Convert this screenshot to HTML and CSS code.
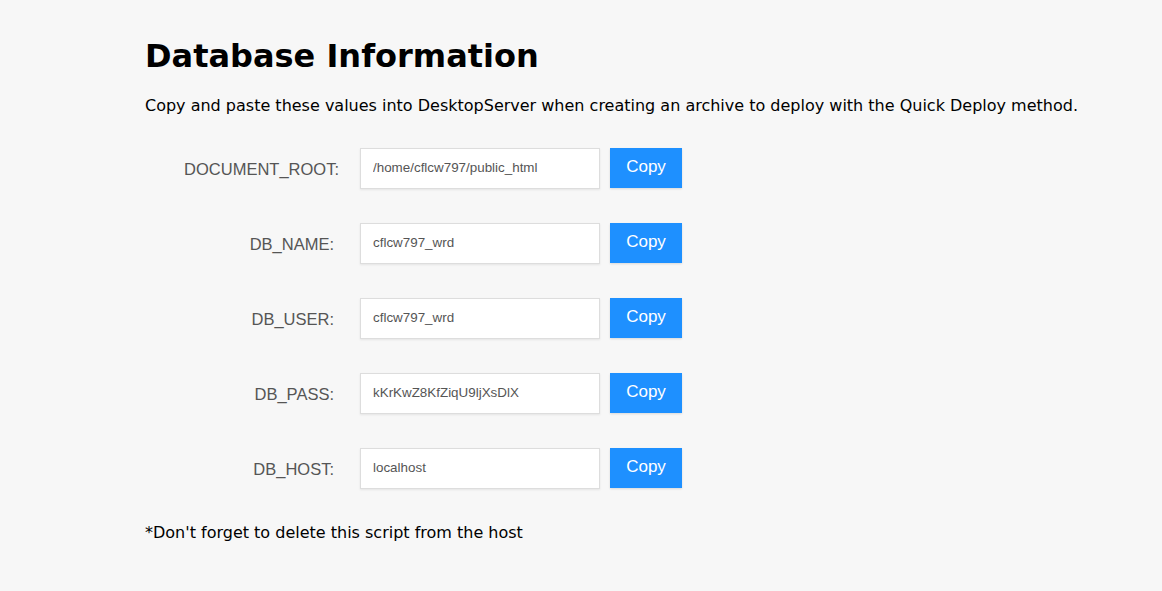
FILE: index.html
```html
<!DOCTYPE html>
<html>
<head>
<meta charset="utf-8">
<link rel="stylesheet" href="styles.css">
</head>
<body>
<div class="page">
  <h1 class="title">Database Information</h1>
  <p class="intro">Copy and paste these values into DesktopServer when creating an archive to deploy with the Quick Deploy method.</p>
  <div class="fields">
    <div class="row"><label class="label">DOCUMENT_ROOT:</label><input class="field" type="text" value="/home/cflcw797/public_html"><button class="copy">Copy</button></div>
    <div class="row"><label class="label label-short">DB_NAME:</label><input class="field" type="text" value="cflcw797_wrd"><button class="copy">Copy</button></div>
    <div class="row"><label class="label label-short">DB_USER:</label><input class="field" type="text" value="cflcw797_wrd"><button class="copy">Copy</button></div>
    <div class="row"><label class="label label-short">DB_PASS:</label><input class="field" type="text" value="kKrKwZ8KfZiqU9ljXsDlX"><button class="copy">Copy</button></div>
    <div class="row"><label class="label label-short">DB_HOST:</label><input class="field" type="text" value="localhost"><button class="copy">Copy</button></div>
  </div>
  <p class="note">*Don't forget to delete this script from the host</p>
</div>
</body>
</html>
```
FILE: styles.css
```css
html, body {
  margin: 0;
  padding: 0;
  background: #f7f7f7;
}
body {
  font-family: "DejaVu Sans", Verdana, sans-serif;
  color: #000;
}
.page {
  padding: 36px 0 0 145px;
}
.title {
  margin: 0;
  font-size: 32px;
  font-weight: bold;
  line-height: 40px;
}
.intro {
  margin: 18px 0 0 0;
  font-size: 16px;
  line-height: 24px;
}
.fields {
  margin-top: 30px;
  display: flex;
  flex-direction: column;
  gap: 35px;
}
.row {
  display: flex;
  align-items: center;
  height: 40px;
}
.label {
  width: 194px;
  box-sizing: border-box;
  text-align: right;
  font-family: "Liberation Sans", Arial, sans-serif;
  font-size: 16.5px;
  color: #555;
  padding-top: 3px;
}
.label-short {
  padding-right: 5px;
}
.field {
  margin-left: 21px;
  width: 240px;
  height: 41px;
  box-sizing: border-box;
  border: 1px solid #ddd;
  background: #fff;
  padding: 0 12px 1px 12px;
  font-family: "Liberation Sans", Arial, sans-serif;
  font-size: 13.4px;
  color: #555;
  box-shadow: 0 1px 2px rgba(0,0,0,0.08);
  outline: none;
}
.copy {
  margin-left: 10px;
  width: 72px;
  height: 40px;
  border: none;
  background: #1e90ff;
  color: #fff;
  font-family: "Liberation Sans", Arial, sans-serif;
  font-size: 17px;
  padding: 0 0 3px 0;
  box-shadow: 0 1px 2px rgba(0,0,0,0.12);
  cursor: pointer;
}
.note {
  margin: 33px 0 0 0;
  font-size: 16px;
  line-height: 24px;
}
```
